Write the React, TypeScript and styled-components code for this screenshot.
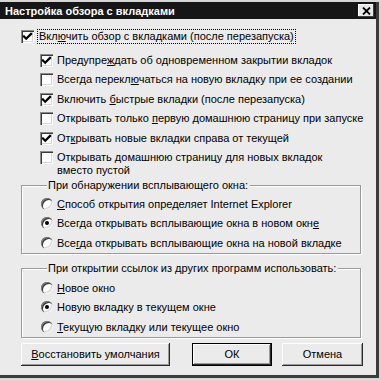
import styled, { createGlobalStyle } from "styled-components";

const GlobalStyle = createGlobalStyle`
  html, body {
    margin: 0;
    padding: 0;
    background: #d6d6d6;
  }
  body {
    font-family: "Liberation Sans", Arial, sans-serif;
    font-size: 11px;
    color: #000;
  }
`;

const Screen = styled.div`
  width: 381px;
  height: 381px;
  overflow: hidden;
`;

const Window = styled.div`
  width: 376px;
  height: 373px;
  margin-top: 2px;
  background: #ebebeb;
  border-right: 3px solid #3c3c3c;
  border-bottom: 3px solid #3c3c3c;
  display: flex;
  flex-direction: column;
`;

const TitleBar = styled.div`
  height: 17px;
  background: #161616;
  color: #fff;
  display: flex;
  align-items: center;
  justify-content: space-between;
  padding: 0 2px 0 5px;
  font-weight: bold;
  font-size: 11px;
`;

const CloseButton = styled.div`
  width: 16px;
  height: 13px;
  background: #e8e8e8;
  box-shadow: inset -1px -1px 0 #404040, inset 1px 1px 0 #fff;
  display: flex;
  align-items: center;
  justify-content: center;
`;

const Body = styled.div`
  display: flex;
  flex-direction: column;
  padding: 10px 0 0 21px;
  width: 342px;
`;

const MainRow = styled.div`
  display: flex;
  align-items: center;
  gap: 3px;
  height: 15px;
`;

const FocusLabel = styled.span`
  border: 1px dotted #000;
  padding: 0 1px;
  line-height: 13px;
  white-space: nowrap;
`;

const SubList = styled.div`
  display: flex;
  flex-direction: column;
  gap: 6.4px;
  margin: 10px 0 0 19px;
`;

const Row = styled.div`
  display: flex;
  align-items: flex-start;
  gap: 4px;
  line-height: 13px;
`;

const RowText = styled.span`
  white-space: pre;
`;

const Box = styled.span`
  flex: none;
  width: 13px;
  height: 13px;
  box-sizing: border-box;
  background: #fff;
  box-shadow: inset 1px 1px 0 #8a8a8a, inset 2px 2px 0 #3a3a3a,
    inset -1px -1px 0 #fff, inset -2px -2px 0 #d8d8d8;
  display: flex;
  align-items: center;
  justify-content: center;
`;

const Radio = styled.span`
  flex: none;
  width: 12px;
  height: 12px;
  border-radius: 50%;
  background: #fff;
  box-shadow: inset 1px 1px 0 #808080, inset 2px 2px 0 #3a3a3a,
    inset -1px -1px 0 #f4f4f4, inset -2px -2px 0 #d8d8d8;
  display: flex;
  align-items: center;
  justify-content: center;
`;

const Dot = styled.span`
  width: 4px;
  height: 4px;
  border-radius: 50%;
  background: #000;
`;

const GroupBox = styled.fieldset<{ $gap: number; $top: number }>`
  margin: ${(p) => p.$gap}px 0 0 0;
  padding: ${(p) => p.$top}px 0 3px 19px;
  width: 340px;
  box-sizing: border-box;
  min-width: 0;
  border: 1px solid #9a9a9a;
  box-shadow: inset 1px 1px 0 #fff, 1px 1px 0 #fff;
  display: flex;
  flex-direction: column;
  gap: 6.5px;
`;

const Legend = styled.legend`
  margin-left: 6px;
  padding: 0 2px 0 1px;
  line-height: 13px;
  background: #ebebeb;
`;

const ButtonRow = styled.div`
  display: flex;
  margin-top: 5px;
  gap: 10px;
`;

const Button = styled.button<{ $width: number; $default?: boolean; $push?: boolean }>`
  width: ${(p) => p.$width}px;
  height: 23px;
  margin-left: ${(p) => (p.$push ? "auto" : "0")};
  padding: 0;
  font-family: "Liberation Sans", Arial, sans-serif;
  font-size: 11px;
  color: #000;
  background: #ebebeb;
  border: ${(p) => (p.$default ? "1px solid #000" : "none")};
  box-shadow: inset -1px -1px 0 #2a2a2a, inset 1px 1px 0 #fff,
    inset -2px -2px 0 #9a9a9a;
`;

function Check({ checked }: { checked?: boolean }) {
  return (
    <Box>
      {checked && (
        <svg width="13" height="13" viewBox="0 0 13 13">
          <path
            d="M3 6.5 L5.2 8.7 L10 3.9"
            fill="none"
            stroke="#000"
            strokeWidth="2.3"
            strokeLinecap="square"
          />
        </svg>
      )}
    </Box>
  );
}

function Option({ on, children }: { on?: boolean; children: React.ReactNode }) {
  return (
    <Row>
      <Radio>{on && <Dot />}</Radio>
      <RowText>{children}</RowText>
    </Row>
  );
}

function CheckItem({ on, children }: { on?: boolean; children: React.ReactNode }) {
  return (
    <Row>
      <Check checked={on} />
      <RowText>{children}</RowText>
    </Row>
  );
}

export default function App() {
  return (
    <Screen>
      <GlobalStyle />
      <Window>
        <TitleBar>
          <span>Настройка обзора с вкладками</span>
          <CloseButton>
            <svg width="9" height="8" viewBox="0 0 9 8">
              <path d="M1 0.5 L8 7.5 M8 0.5 L1 7.5" stroke="#000" strokeWidth="1.8" />
            </svg>
          </CloseButton>
        </TitleBar>
        <Body>
          <MainRow>
            <Check checked />
            <FocusLabel>
              Вкл<u>ю</u>чить обзор с вкладками (после перезапуска)
            </FocusLabel>
          </MainRow>
          <SubList>
            <CheckItem on>
              Предупре<u>ж</u>дать об одновременном закрытии вкладок
            </CheckItem>
            <CheckItem>
              Всегда перекл<u>ю</u>чаться на новую вкладку при ее создании
            </CheckItem>
            <CheckItem on>
              Включить <u>б</u>ыстрые вкладки (после перезапуска)
            </CheckItem>
            <CheckItem>
              Открывать только <u>п</u>ервую домашнюю страницу при запуске
            </CheckItem>
            <CheckItem on>
              От<u>к</u>рывать новые вкладки справа от текущей
            </CheckItem>
            <CheckItem>
              Открывать <u>д</u>омашнюю страницу для новых вкладок{"\n"}вместо пустой
            </CheckItem>
          </SubList>
          <GroupBox $gap={2} $top={6}>
            <Legend>При обнаружении всплывающего окна:</Legend>
            <Option>
              <u>С</u>пособ открытия определяет Internet Explorer
            </Option>
            <Option on>
              Всегда открывать всплывающие окна в новом окн<u>е</u>
            </Option>
            <Option>
              Все<u>г</u>да открывать всплывающие окна на новой вкладке
            </Option>
          </GroupBox>
          <GroupBox $gap={8} $top={7}>
            <Legend>При открытии ссылок из других программ использовать:</Legend>
            <Option>
              <u>Н</u>овое окно
            </Option>
            <Option on>
              Новую вкла<u>д</u>ку в текущем окне
            </Option>
            <Option>
              <u>Т</u>екущую вкладку или текущее окно
            </Option>
          </GroupBox>
          <ButtonRow>
            <Button $width={149}>
              <u>В</u>осстановить умолчания
            </Button>
            <Button $width={80} $default $push>
              ОК
            </Button>
            <Button $width={81}>Отмена</Button>
          </ButtonRow>
        </Body>
      </Window>
    </Screen>
  );
}
